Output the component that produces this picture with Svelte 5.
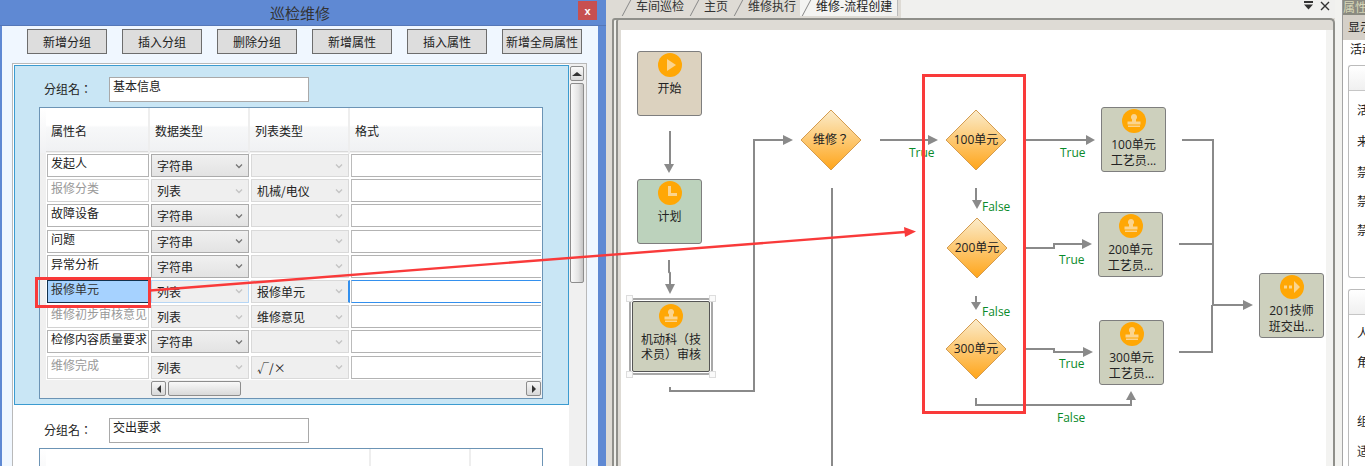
<script>
	const buttons = ['新增分组', '插入分组', '删除分组', '新增属性', '插入属性', '新增全局属性'];

	const rows = [
		{ name: '发起人', type: '字符串' },
		{ name: '报修分类', type: '列表', list: '机械/电仪', off: true },
		{ name: '故障设备', type: '字符串' },
		{ name: '问题', type: '字符串' },
		{ name: '异常分析', type: '字符串' },
		{ name: '报修单元', type: '列表', list: '报修单元', off: true, selected: true },
		{ name: '维修初步审核意见', type: '列表', list: '维修意见', off: true },
		{ name: '检修内容质量要求', type: '字符串' },
		{ name: '维修完成', type: '列表', list: '√/×', off: true }
	];

	const tabs = ['车间巡检', '主页', '维修执行', '维修-流程创建'];

	// flow coordinates are page pixels, the canvas starts at 621,30
	const ox = 621;
	const oy = 30;

	const nodes = [
		{ x: 637, y: 51, lines: ['开始'], icon: 'play', bg: '#dcd2bf' },
		{ x: 637, y: 179, lines: ['计划'], icon: 'clock', bg: '#bcd2bc' },
		{ x: 632, y: 301, w: 78, h: 71, lines: ['机动科（技', '术员）审核'], icon: 'stamp', selected: true },
		{ x: 1101, y: 107, lines: ['100单元', '工艺员...'], icon: 'stamp' },
		{ x: 1098, y: 212, lines: ['200单元', '工艺员...'], icon: 'stamp' },
		{ x: 1099, y: 320, lines: ['300单元', '工艺员...'], icon: 'stamp' },
		{ x: 1259, y: 273, lines: ['201技师', '班交出...'], icon: 'go' }
	];

	const diamonds = [
		{ x: 831, y: 140, label: '维修？' },
		{ x: 976, y: 140, label: '100单元' },
		{ x: 977, y: 248, label: '200单元' },
		{ x: 976, y: 349, label: '300单元' }
	];

	const edges = [
		{ d: 'M670 131V166', head: '664,164 674,164 669,173' },
		{ d: 'M669 260V272L670 273V286', head: '665,284 675,284 670,294' },
		{ d: 'M670 387V391H754V140H785', head: '783,135 783,145 793,140' },
		{ d: 'M832 188V466' },
		{ d: 'M880 140H930', head: '928,135 928,145 938,140' },
		{ d: 'M1026 140H1088', head: '1086,135 1086,145 1095,140' },
		{ d: 'M976 188V203', head: '972,200 982,200 977,209' },
		{ d: 'M1026 248H1054V244H1084', head: '1082,239 1082,249 1092,244' },
		{ d: 'M976 296V304', head: '971,302 981,302 976,310' },
		{ d: 'M1026 349H1054V352H1086', head: '1083,347 1083,357 1093,352' },
		{ d: 'M976 398V405H1131V398', head: '1126,400 1136,400 1131,391' },
		{ d: 'M1182 140H1213V304' },
		{ d: 'M1179 244H1212' },
		{ d: 'M1179 352H1212V305' },
		{ d: 'M1212 305H1245', head: '1243,300 1243,310 1253,305' }
	];

	const edgeLabels = [
		{ x: 909, y: 157, text: 'True' },
		{ x: 1060, y: 157, text: 'True' },
		{ x: 982, y: 211, text: 'False' },
		{ x: 1059, y: 264, text: 'True' },
		{ x: 982, y: 316, text: 'False' },
		{ x: 1059, y: 368, text: 'True' },
		{ x: 1057, y: 422, text: 'False' }
	];

	const sideRows = [
		{ text: '活', top: 103 },
		{ text: '来', top: 134 },
		{ text: '禁', top: 165 },
		{ text: '禁', top: 194 },
		{ text: '禁', top: 223 },
		{ text: '人', top: 326 },
		{ text: '角', top: 355 },
		{ text: '组', top: 414 },
		{ text: '适', top: 444 }
	];
</script>

<div class="page">
	<section class="dialog">
		<header class="title-bar">
			<span class="title">巡检维修</span>
			<button class="close">x</button>
		</header>

		<div class="dialog-body">
			<div class="toolbar">
				{#each buttons as b}
					<button class="tool-btn">{b}</button>
				{/each}
			</div>

			<div class="scroll-area">
				<div class="groups">
					<div class="group first">
						<div class="group-name">
							<span class="group-label">分组名：</span>
							<div class="group-input">基本信息</div>
						</div>
						<div class="table">
							<div class="grid head-row">
								<span class="gutter"></span>
								<span class="th">属性名</span>
								<span class="th">数据类型</span>
								<span class="th">列表类型</span>
								<span class="th">格式</span>
							</div>
							{#each rows as row}
								<div class="grid row" class:selected={row.selected}>
									<span class="gutter"></span>
									<div class="cell"><div class="field name" class:off={row.off && !row.selected}>{row.name}</div></div>
									<div class="cell">
										<div class="pick" class:off={row.off}>
											<span>{row.type}</span>
											<svg width="8" height="6" viewBox="0 0 8 6"><path d="M1 1.5L4 4.5L7 1.5" fill="none" stroke="currentColor" stroke-width="1.3" /></svg>
										</div>
									</div>
									<div class="cell list-cell">
										<div class="pick off">
											<span>{row.list ?? ''}</span>
											<svg width="8" height="6" viewBox="0 0 8 6"><path d="M1 1.5L4 4.5L7 1.5" fill="none" stroke="currentColor" stroke-width="1.3" /></svg>
										</div>
									</div>
									<div class="cell format-cell"><div class="field"></div></div>
								</div>
							{/each}
							<div class="h-scroll">
								<div class="h-btn left"><i></i></div>
								<div class="h-thumb"></div>
								<div class="h-btn right"><i></i></div>
							</div>
						</div>
					</div>

					<div class="group second">
						<div class="group-name">
							<span class="group-label">分组名：</span>
							<div class="group-input">交出要求</div>
						</div>
						<div class="table">
							<div class="grid head-row wide">
								<span class="gutter"></span>
								<span class="th">属性名</span>
								<span class="th">数据类型</span>
								<span class="th">列表类型</span>
							</div>
						</div>
					</div>
				</div>

				<div class="v-scroll">
					<div class="v-btn"><i></i></div>
					<div class="v-thumb"></div>
				</div>
			</div>
		</div>
	</section>

	<section class="workspace">
		<nav class="tabs">
			{#each tabs as tab, i}
				<span class="tab" class:active={i === tabs.length - 1}>{tab}</span>
			{/each}
			<span class="tab-tools">
				<svg width="12" height="10" viewBox="0 0 12 10"><path d="M1 0H10V2H1ZM1 3.5H10L5.5 8.5Z" fill="#333" /></svg>
				<svg width="10" height="10" viewBox="0 0 10 10"><path d="M1 1L9 9M9 1L1 9" stroke="#333" stroke-width="1.4" /></svg>
			</span>
		</nav>

		<div class="frame">
			<div class="canvas">
				<svg class="edges" width="705" height="436" viewBox="621 30 705 436">
					<defs>
						<linearGradient id="diamond" x1="0" y1="0" x2="0" y2="1">
							<stop offset="0" stop-color="#fbeccb" />
							<stop offset="1" stop-color="#ffa51a" />
						</linearGradient>
					</defs>
					{#each edges as e}
						<path d={e.d} fill="none" stroke="#8a8a8a" stroke-width="2" />
						{#if e.head}
							<polygon points={e.head} fill="#8a8a8a" />
						{/if}
					{/each}
					{#each edgeLabels as l}
						<text class="edge-label" x={l.x} y={l.y}>{l.text}</text>
					{/each}
					{#each diamonds as d}
						<polygon
							points="{d.x},{d.y - 30} {d.x + 30},{d.y} {d.x},{d.y + 30} {d.x - 30},{d.y}"
							fill="url(#diamond)"
							stroke="#d49c50"
						/>
						<text class="diamond-label" x={d.x} y={d.y + 4} text-anchor="middle">{d.label}</text>
					{/each}
				</svg>

				{#each nodes as n}
					<div
						class="node"
						class:selected={n.selected}
						style="left:{n.x - ox}px;top:{n.y - oy}px;width:{n.w ?? 65}px;height:{n.h ?? 65}px;background:{n.bg ?? '#cdd0bd'}"
					>
						<svg class="node-icon" width="24" height="24" viewBox="0 0 24 24">
							<circle cx="12" cy="12" r="12" fill="#ffa705" />
							{#if n.icon === 'play'}
								<path d="M9 6L18 12L9 18Z" fill="#fbd48e" />
							{:else if n.icon === 'clock'}
								<path d="M10 5H13V12H19V15H10Z" fill="#fbd48e" />
							{:else if n.icon === 'stamp'}
								<path d="M12 5A3.2 3.2 0 0 1 14 10.6V12.5H18.5V15.5H5.5V12.5H10V10.6A3.2 3.2 0 0 1 12 5ZM6 16.5H18V18H6Z" fill="#fbd48e" />
							{:else}
								<path d="M4 10.5H7V13.5H4ZM9 10.5H12V13.5H9ZM14 6L20 12L14 18Z" fill="#fbd48e" />
							{/if}
						</svg>
						<div class="node-text">
							{#each n.lines as line}
								<div>{line}</div>
							{/each}
						</div>
						{#if n.selected}
							<i class="handle tl"></i><i class="handle tr"></i><i class="handle bl"></i><i class="handle br"></i>
						{/if}
					</div>
				{/each}
			</div>
		</div>
	</section>

	<aside class="side">
		<div class="side-head">属性</div>
		<div class="side-show">显示</div>
		<div class="side-body">
			<div class="side-first">活动</div>
			<div class="card one"></div>
			<div class="card two"></div>
			{#each sideRows as r}
				<span class="side-row" style="top:{r.top}px">{r.text}</span>
			{/each}
		</div>
	</aside>

	<!-- red annotation drawn over the screenshot -->
	<svg class="markup" width="1365" height="466">
		<rect x="36.5" y="278.5" width="113" height="28" fill="none" stroke="#f93a3a" stroke-width="3" />
		<rect x="923.5" y="75.5" width="101" height="337" fill="none" stroke="#f93a3a" stroke-width="3" />
		<path d="M150 290.5L905 232" stroke="#f93a3a" stroke-width="2.4" fill="none" />
		<polygon points="916,231.5 904,227 905,237" fill="#f93a3a" />
	</svg>
</div>

<style>
	:global(body) {
		margin: 0;
		background: #fff;
	}

	.page {
		position: relative;
		display: flex;
		width: 1365px;
		height: 466px;
		overflow: hidden;
		font-family: 'Noto Sans CJK SC', 'Liberation Sans', sans-serif;
		font-size: 12px;
		color: #222;
	}

	/* left dialog */
	.dialog {
		flex: 0 0 606px;
		display: flex;
		flex-direction: column;
		background: #5f89d3;
		padding: 0 8px 0 2px;
		box-sizing: border-box;
	}

	.title-bar {
		position: relative;
		flex: 0 0 25px;
		display: flex;
		align-items: center;
		justify-content: center;
		border-bottom: 1px solid #5577b8;
		margin-left: -2px;
		margin-right: -8px;
		padding-right: 6px;
	}

	.title {
		font-size: 15px;
		color: #333;
	}

	.close {
		position: absolute;
		left: 578px;
		top: 1px;
		width: 19px;
		height: 19px;
		padding: 0;
		border: 0;
		background: #c75050;
		color: #fff;
		font: bold 11px 'Liberation Sans', sans-serif;
	}

	.dialog-body {
		flex: 1;
		min-height: 0;
		background: #f0f7ff;
		padding: 3px 10px 0;
	}

	.toolbar {
		display: flex;
		gap: 15px;
		padding-left: 15px;
		margin-bottom: 9px;
	}

	.tool-btn {
		width: 80px;
		height: 25px;
		padding: 0;
		border: 1px solid #6d6d6d;
		background: #dddddd;
		color: #222;
		font: 12px 'Noto Sans CJK SC', sans-serif;
		white-space: nowrap;
	}

	.scroll-area {
		display: flex;
		width: 575px;
		height: 420px;
		box-sizing: border-box;
		border: 1px solid #b9b9b9;
		padding-left: 1px;
		background: #fff;
		overflow: hidden;
	}

	.groups {
		flex: 0 0 555px;
		padding-top: 1px;
	}

	.group {
		box-sizing: border-box;
		padding: 11px 24px 0 25px;
	}

	.group.first {
		height: 340px;
		background: #c9e6f5;
		border: 1px solid #3b9bd0;
		padding-left: 24px;
		padding-right: 24px;
	}

	.group.second {
		padding-top: 13px;
	}

	.group-name {
		display: flex;
		align-items: flex-start;
		height: 26px;
		margin-bottom: 4px;
	}

	.group-label {
		width: 70px;
		padding-left: 5px;
		box-sizing: border-box;
		line-height: 24px;
		font-family: 'Noto Sans CJK TC', sans-serif;
	}

	.group-input {
		width: 200px;
		height: 25px;
		box-sizing: border-box;
		border: 1px solid #a9a9a9;
		background: #fff;
		padding: 0 3px;
		line-height: 16px;
	}

	.table {
		width: 504px;
		box-sizing: border-box;
		border: 1px solid #6c94b5;
		background: #f0f0f0;
	}

	.grid {
		display: grid;
		grid-template-columns: 6px 104px 100px 100px 192px;
	}

	.grid.wide {
		grid-template-columns: 6px 325px 100px 71px;
	}

	.head-row {
		height: 44px;
		background: linear-gradient(#fff 0 40%, #f7f8f9 45%, #f0f1f3);
		border-bottom: 1px solid #d9d9d9;
		box-sizing: border-box;
	}

	.gutter {
		background: #f0f0f0;
	}

	.head-row .gutter {
		background: linear-gradient(#fff, #f0f1f3);
	}

	.th {
		padding-left: 5px;
		line-height: 46px;
		border-right: 2px solid #eeeeee;
		box-sizing: border-box;
		white-space: nowrap;
	}

	.th:last-child {
		border-right: 0;
	}

	.row {
		height: 25.2px;
		background: #fff;
	}

	.row:nth-child(2) {
		margin-top: 1px;
	}

	.cell {
		box-sizing: border-box;
		padding: 1px;
		min-width: 0;
	}

	.field {
		height: 23px;
		box-sizing: border-box;
		border: 1px solid #b3b3b3;
		background: #fff;
		padding: 0 3px;
		line-height: 15px;
		white-space: nowrap;
		overflow: hidden;
	}

	.field.off {
		color: #999;
		border-color: #d2d2d2;
	}

	.format-cell .field {
		border-right: 0;
		border-left-color: #bbb;
	}

	.pick {
		display: flex;
		align-items: center;
		justify-content: space-between;
		height: 23px;
		box-sizing: border-box;
		border: 1px solid #ababab;
		background: linear-gradient(#f0f0f0, #e3e3e3);
		padding: 0 5px;
		color: #777;
	}

	.pick span {
		color: #222;
		white-space: nowrap;
	}

	.pick.off {
		border-color: #d9d9d9;
		background: #efefef;
		color: #c4c4c4;
	}

	.row.selected .name {
		background: #a6d2ff;
		border-color: #12324e;
		color: #333;
	}

	.row.selected .cell:nth-child(3) .pick {
		border-color: #b6d6f5;
	}

	.row.selected .list-cell {
		padding-right: 0;
	}

	.row.selected .list-cell .pick {
		border-right: 2px solid #3390ee;
	}

	.row.selected .format-cell .field {
		border-top-color: #3390ee;
		border-bottom-color: #3390ee;
	}

	.h-scroll {
		display: flex;
		align-items: center;
		height: 18px;
		padding: 0 1px 0 111px;
		background: #f0f0f0;
	}

	.h-btn {
		width: 15px;
		height: 15px;
		box-sizing: border-box;
		border: 1px solid #8d8d8d;
		border-radius: 2px;
		background: linear-gradient(#f7f7f7, #d8d8d8);
		display: flex;
		align-items: center;
		justify-content: center;
	}

	.h-btn i {
		width: 0;
		height: 0;
		border-top: 4px solid transparent;
		border-bottom: 4px solid transparent;
	}

	.h-btn.left i {
		border-right: 4px solid #333;
	}

	.h-btn.right i {
		border-left: 4px solid #333;
	}

	.h-btn.right {
		margin-left: auto;
	}

	.h-thumb {
		width: 73px;
		height: 15px;
		box-sizing: border-box;
		margin-left: 2px;
		border: 1px solid #8d8d8d;
		border-radius: 2px;
		background: linear-gradient(#f9f9f9, #d9d9d9);
	}

	.v-scroll {
		flex: 1;
		background: #f0f0f0;
		padding: 2px 1px 0;
		border-right: 1px solid #f0f0f0;
	}

	.v-btn {
		height: 15px;
		box-sizing: border-box;
		border: 1px solid #8d8d8d;
		border-radius: 2px;
		background: linear-gradient(#f9f9f9, #d9d9d9);
		display: flex;
		align-items: center;
		justify-content: center;
	}

	.v-btn i {
		width: 0;
		height: 0;
		border-left: 5px solid transparent;
		border-right: 5px solid transparent;
		border-bottom: 4px solid #333;
	}

	.v-thumb {
		height: 200px;
		box-sizing: border-box;
		margin-top: 2px;
		border: 1px solid #8d8d8d;
		border-radius: 2px;
		background: linear-gradient(90deg, #fafafa, #e4e4e4 60%, #c4c4c4);
	}

	/* workspace with tabs and flow canvas */
	.workspace {
		flex: 0 0 729px;
		display: flex;
		flex-direction: column;
		background: #dedbd5;
		box-sizing: border-box;
	}

	.tabs {
		flex: 0 0 18px;
		display: flex;
		align-items: flex-start;
		padding-left: 14px;
		background: linear-gradient(90deg, #dedbd5 0 295px, #f0f0ee 295px);
		color: #333;
	}

	.tab {
		position: relative;
		height: 15px;
		padding: 0 4px 0 16px;
		white-space: nowrap;
		line-height: 11px;
	}

	.tab::before {
		content: '';
		position: absolute;
		left: 6px;
		top: 0;
		height: 16px;
		border-left: 1px solid #888;
		transform: skewX(-28deg);
	}

	.tab.active {
		padding-right: 5px;
		height: 16px;
		background: linear-gradient(100deg, #f4f4f2 20%, #f2f2f0);
		border-right: 1px solid #bbb;
		color: #222;
	}

	.tab-tools {
		margin-left: auto;
		display: flex;
		gap: 5px;
		padding: 1px 5px 0 0;
	}

	.frame {
		flex: 1;
		min-height: 0;
		margin-left: 6px;
		padding: 10px 6px 0 7px;
		border: 2px solid #8f8f8a;
		border-bottom: 0;
		border-radius: 3px 5px 0 0;
		background: linear-gradient(#dedbd5, #dedbd5) left top / 100% 10px no-repeat, linear-gradient(90deg, #dedbd5 0 98%, #f3f3f1 98%);
		box-shadow: inset 2px 0 0 #eeeeea, inset 4px 0 0 #8f8f8a;
	}

	.canvas {
		position: relative;
		width: 705px;
		height: 436px;
		background: #fff;
		overflow: hidden;
	}

	.edges {
		position: absolute;
		left: 0;
		top: 0;
	}

	.edge-label {
		font: 12px 'Open Sans', 'Liberation Sans', sans-serif;
		fill: #0a8a2a;
	}

	.diamond-label {
		font: 12px 'Open Sans', 'Noto Sans CJK TC', sans-serif;
		fill: #222;
	}

	.node {
		position: absolute;
		box-sizing: border-box;
		border: 1px solid #7e7e7e;
		border-radius: 3px;
		display: flex;
		flex-direction: column;
		align-items: center;
		padding-top: 1px;
		text-align: center;
	}

	.node.selected {
		border-radius: 2px;
		border-color: #555;
		outline: 2px solid #a8a8a8;
		outline-offset: 1px;
		padding-top: 2px;
	}

	.node-icon {
		flex: none;
	}

	.node-text {
		margin-top: 4px;
		line-height: 16px;
		white-space: nowrap;
		font-family: 'Open Sans', 'Noto Sans CJK TC', sans-serif;
	}

	.node.selected .node-text {
		line-height: 15px;
	}

	.handle {
		position: absolute;
		width: 7px;
		height: 7px;
		box-sizing: border-box;
		background: #fafafa;
		border: 1px solid #ddd;
	}

	.handle.tl { left: -7px; top: -7px; }
	.handle.tr { right: -7px; top: -7px; }
	.handle.bl { left: -7px; bottom: -7px; }
	.handle.br { right: -7px; bottom: -7px; }

	/* right properties panel, mostly cut off */
	.side {
		flex: 1;
		min-width: 0;
		display: flex;
		flex-direction: column;
		background: #f2f2ef;
		padding-left: 7px;
		overflow: hidden;
		white-space: nowrap;
	}

	.side-head {
		flex: 0 0 15px;
		background: #8a8a80;
		color: #d8d8b8;
		line-height: 13px;
		border-left: 1px solid #999;
	}

	.side-show {
		flex: 0 0 25px;
		background: #d5d0c8;
		line-height: 24px;
		border-left: 1px solid #999;
		padding-left: 5px;
	}

	.side-body {
		position: relative;
		flex: 1;
		background: #fff;
		border-left: 1px solid #a5a5a5;
	}

	.side-first {
		padding: 1px 0 0 7px;
		line-height: 16px;
	}

	.card {
		position: absolute;
		left: 5px;
		width: 30px;
		box-sizing: border-box;
		border: 1px solid #bbb;
		border-right: 0;
		border-radius: 3px 0 0 3px;
	}

	.card.one {
		top: 25px;
		height: 213px;
		background: linear-gradient(#fff, #f0f0f0 24px, #8d8d8d 24px, #fff 25px) no-repeat;
	}

	.card.two {
		top: 249px;
		height: 200px;
		background: linear-gradient(#fff, #f0f0f0 24px, #8d8d8d 24px, #fff 25px) no-repeat;
	}

	.side-row {
		position: absolute;
		left: 14px;
		margin-top: -40px;
		line-height: 14px;
	}

	/* annotation layer */
	.markup {
		position: absolute;
		left: 0;
		top: 0;
		pointer-events: none;
	}
</style>
